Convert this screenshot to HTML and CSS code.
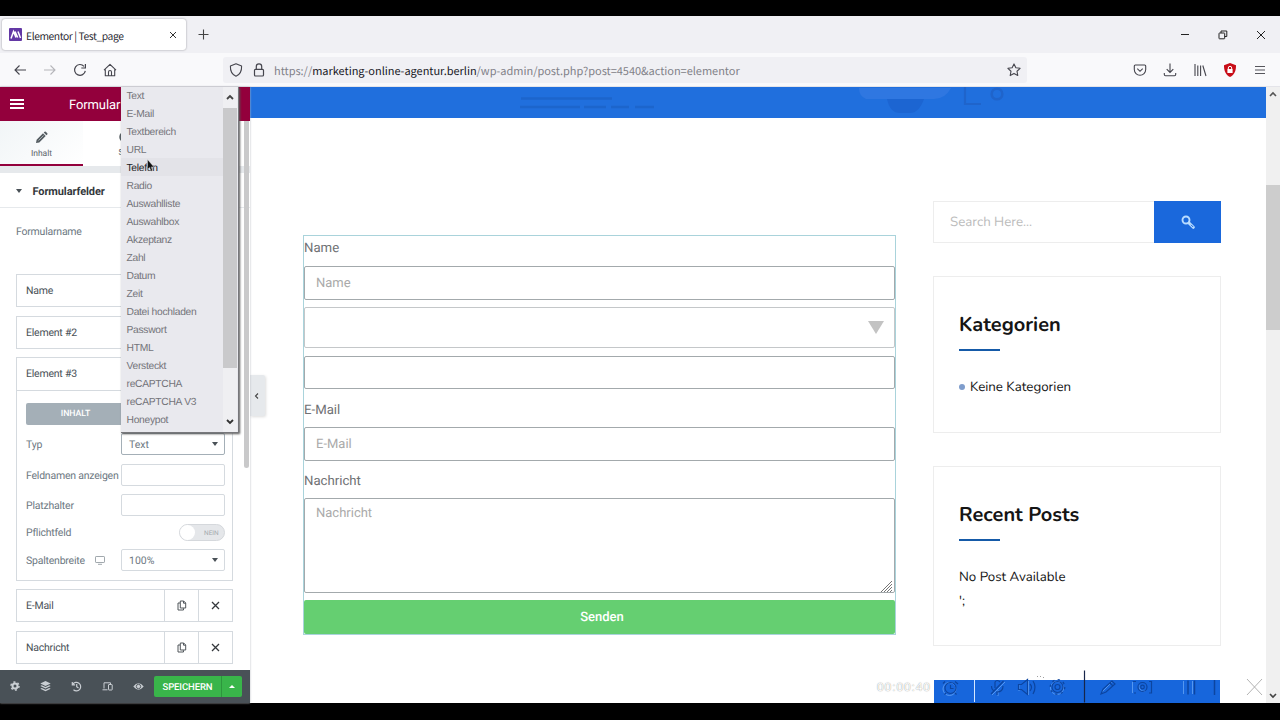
FILE: index.html
```html
<!DOCTYPE html>
<html lang="de">
<head>
<meta charset="utf-8">
<title>Elementor | Test_page</title>
<link rel="stylesheet" href="styles.css">
</head>
<body>
<div class="window">
  <header class="tabbar">
    <div class="tab">
      <svg class="favicon" width="13" height="13" viewBox="0 0 13 13"><rect width="13" height="13" rx="1" fill="#6338a5"/><path d="M2 10.500 4.500 3.500 7 9.500M6 3.500 8.700 9.500M9 3.500 11.500 10" fill="none" stroke="#fff" stroke-width="1.500"/></svg>
      <span class="tab-title">Elementor | Test_page</span>
      <svg class="tab-close" width="8" height="8" viewBox="0 0 8 8"><path d="M1 1 7 7M7 1 1 7" stroke="#333" stroke-width="1"/></svg>
    </div>
    <svg class="new-tab" width="11" height="11" viewBox="0 0 11 11"><path d="M5.500 .5v10M.5 5.500h10" stroke="#444" stroke-width="1.100"/></svg>
    <div class="window-buttons">
      <svg width="10" height="10" viewBox="0 0 10 10"><path d="M1 4.500h8" stroke="#222"/></svg>
      <svg width="10" height="10" viewBox="0 0 10 10" fill="none" stroke="#222"><rect x="1" y="3" width="5.700" height="5.800" rx=".5"/><path d="M3 3V1h5.800v5.500H6.700"/></svg>
      <svg width="10" height="10" viewBox="0 0 10 10"><path d="M1 1 9 9M9 1 1 9" stroke="#222"/></svg>
    </div>
  </header>
  <nav class="navbar">
    <div class="nav-buttons">
      <svg width="14" height="14" viewBox="0 0 14 14" fill="none" stroke="#45454d" stroke-width="1.100"><path d="M13 7H2M6.500 2.500 2 7l4.500 4.500"/></svg>
      <svg width="14" height="14" viewBox="0 0 14 14" fill="none" stroke="#b5b5ba" stroke-width="1.100"><path d="M1 7h11M7.500 2.500 12 7l-4.500 4.500"/></svg>
      <svg width="14" height="14" viewBox="0 0 14 14" fill="none" stroke="#45454d" stroke-width="1.200"><path d="M12.300 7.800A5.400 5.400 0 1 1 11 3.300M12.400 1v4H8.300"/></svg>
      <svg width="14" height="14" viewBox="0 0 14 14" fill="none" stroke="#45454d" stroke-width="1.100" stroke-linejoin="round"><path d="M1 7.200 7 1.300l6 5.900M2.300 6.500v6.200h9.400V6.500M5.500 12.500V9a1.500 1.500 0 0 1 3 0v3.500"/></svg>
    </div>
    <div class="urlbar">
      <svg width="14" height="14" viewBox="0 0 14 14" fill="none" stroke="#45454d" stroke-width="1.100" stroke-linejoin="round"><path d="M7 .8 12.600 3C12.800 8 10.500 11.800 7 13.200 3.500 11.800 1.200 8 1.400 3Z"/></svg>
      <svg width="12" height="14" viewBox="0 0 12 14" fill="none" stroke="#45454d" stroke-width="1.200"><rect x="1.500" y="6.300" width="9" height="6.700" rx="1"/><path d="M3.300 6V3.500a2.700 2.700 0 0 1 5.400 0V6"/></svg>
      <span class="url">https://<b>marketing-online-agentur.berlin</b>/wp-admin/post.php?post=4540&amp;action=elementor</span>
      <svg class="star" width="14" height="14" viewBox="0 0 14 14" fill="none" stroke="#45454d" stroke-width="1.100" stroke-linejoin="round"><path d="m7 .9 1.850 3.900 4.250.5-3.100 2.950.8 4.300L7 10.400l-3.800 2.150.8-4.300L.9 5.300l4.250-.5Z"/></svg>
    </div>
    <div class="nav-tools">
      <svg width="14" height="14" viewBox="0 0 14 14" fill="none" stroke="#45454d" stroke-width="1.100"><path d="M2.300 2h9.400q1 0 1 1v3.500a5.700 5.700 0 0 1-11.400 0V3q0-1 1-1ZM4.300 5.700 7 8.300l2.700-2.600"/></svg>
      <svg width="14" height="14" viewBox="0 0 14 14" fill="none" stroke="#45454d" stroke-width="1.100"><path d="M7 .5v9M3.700 6.200 7 9.500l3.300-3.300M1.300 10v1.600q0 1.200 1.200 1.200h9q1.200 0 1.200-1.200V10"/></svg>
      <svg width="14" height="14" viewBox="0 0 14 14" fill="none" stroke="#45454d" stroke-width="1.100"><path d="M2 1v12M4.800 2.500V13M7.600 2.500V13M9.800 2.500 13 13"/></svg>
      <svg width="14" height="14" viewBox="0 0 14 14"><path d="M7 0 13 2.200C13.200 8 11 12 7 14 3 12 .8 8 1 2.200Z" fill="#c80d18"/><rect x="4.400" y="6" width="5.200" height="4" fill="#fff"/><path d="M5.300 6V5a1.700 1.700 0 0 1 3.400 0v1" fill="none" stroke="#fff"/></svg>
      <svg width="14" height="14" viewBox="0 0 14 14" stroke="#55555c" stroke-width="1.100"><path d="M2 3.500h10M2 7h10M2 10.500h10"/></svg>
    </div>
  </nav>

  <main class="workspace">
    <aside class="panel">
      <div class="panel-header">
        <svg width="14" height="10" viewBox="0 0 14 10" stroke="#fff" stroke-width="1.900"><path d="M0 1h14M0 5h14M0 9h14"/></svg>
        <span class="panel-title">Formular</span>
        <svg class="panel-grid" width="3" height="10" viewBox="0 0 3 10" fill="#e9b9cb"><path d="M0 0h2v2H0ZM0 4h2v2H0ZM0 8h2v2H0Z"/></svg>
      </div>
      <div class="panel-tabs">
        <div class="panel-tab active">
          <svg width="13" height="13" viewBox="0 0 13 13" fill="#565e63"><path d="M1 12 1.600 8.700 8 2.300 10.700 5 4.300 11.400ZM8.700 1.600 9.600.7q.6-.5 1.200 0l1.500 1.500q.5.600 0 1.200l-.9.900Z"/><path d="m3.500 9.500 5-5" stroke="#dfe5e8" stroke-width=".6"/></svg>
          <span>Inhalt</span>
        </div>
        <div class="panel-tab">
          <svg width="12" height="12" viewBox="0 0 12 12"><circle cx="6" cy="6" r="5" fill="none" stroke="#565e63" stroke-width="1.500"/><path d="M6 1a5 5 0 0 0 0 10Z" fill="#565e63"/></svg>
          <span>Stil</span>
        </div>
        <div class="panel-tab"></div>
      </div>
      <div class="panel-body">
        <div class="section-head"><i class="caret"></i><b>Formularfelder</b></div>
        <div class="section">
          <div class="form-name">Formularname</div>
          <div class="item"><span>Name</span></div>
          <div class="item"><span>Element #2</span></div>
          <div class="item-open">
            <div class="item-title">Element #3</div>
            <div class="item-controls">
              <div class="subtab">INHALT</div>
              <div class="control first"><label>Typ</label><div class="box select dark"><span>Text</span><i class="caret"></i></div></div>
              <div class="control"><label>Feldnamen anzeigen</label><div class="box"></div></div>
              <div class="control"><label>Platzhalter</label><div class="box"></div></div>
              <div class="control short"><label>Pflichtfeld</label><div class="switch"><i></i><span>NEIN</span></div></div>
              <div class="control"><label>Spaltenbreite</label><svg class="device" width="10" height="9" viewBox="0 0 10 9" fill="none" stroke="#a1a8ad"><rect x=".5" y=".5" width="9" height="6" rx=".6"/><path d="M3 8.300h4"/></svg><div class="box select"><span>100%</span><i class="caret"></i></div></div>
            </div>
          </div>
          <div class="item tools"><span>E-Mail</span>
            <div class="tool"><svg width="10" height="11" viewBox="0 0 10 11" fill="none" stroke="#50565b"><path d="M3.300 1h3.400l2 2v5H3.300ZM6.500 1v2.200h2.200M3 3H1v7h5.500V8.300"/></svg></div>
            <div class="tool"><svg width="9" height="9" viewBox="0 0 9 9"><path d="M1 1 8 8M8 1 1 8" stroke="#34383c" stroke-width="1.300"/></svg></div>
          </div>
          <div class="item tools"><span>Nachricht</span>
            <div class="tool"><svg width="10" height="11" viewBox="0 0 10 11" fill="none" stroke="#50565b"><path d="M3.300 1h3.400l2 2v5H3.300ZM6.500 1v2.200h2.200M3 3H1v7h5.500V8.300"/></svg></div>
            <div class="tool"><svg width="9" height="9" viewBox="0 0 9 9"><path d="M1 1 8 8M8 1 1 8" stroke="#34383c" stroke-width="1.300"/></svg></div>
          </div>
        </div>
        <div class="panel-scroll"></div>
      </div>
      <footer class="panel-footer">
        <div class="foot-icons">
          <svg width="10" height="10" viewBox="0 0 10 10"><circle cx="5" cy="5" r="2.500" fill="none" stroke="#c9ced3" stroke-width="2"/><circle cx="5" cy="5" r="4" fill="none" stroke="#c9ced3" stroke-width="1.500" stroke-dasharray="2 2.190"/></svg>
          <svg width="11" height="11" viewBox="0 0 11 11" fill="#c9ced3"><path d="m5.500 0 5.200 2.500-5.200 2.500L.3 2.500Z"/><path d="m.3 5 1.500-.7 3.700 1.700 3.700-1.700 1.500.7-5.200 2.500Z"/><path d="m.3 7.700 1.500-.7 3.700 1.700L9.200 7l1.500.7-5.200 2.600Z"/></svg>
          <svg width="11" height="11" viewBox="0 0 11 11" fill="none" stroke="#c9ced3" stroke-width="1.200"><path d="M1.800 3.200A4.300 4.300 0 1 1 2.500 8.800M1.300 1v2.800h2.800M5.700 3v2.800l1.800 1.200"/></svg>
          <svg width="11" height="11" viewBox="0 0 11 11" fill="none" stroke="#c9ced3"><path d="M2 7.500V1.800h6.500V3M.5 8.800h5"/><rect x="6.500" y="3.500" width="3.700" height="5.500" rx=".5"/></svg>
          <svg width="11" height="11" viewBox="0 0 11 11"><path d="M.3 5.500Q5.500-.8 10.700 5.500 5.500 11.800.3 5.500Z" fill="#c9ced3"/><circle cx="5.500" cy="5.500" r="2.200" fill="none" stroke="#495157" stroke-width=".9"/></svg>
        </div>
        <div class="save"><span>SPEICHERN</span><div class="save-more"><i></i></div></div>
      </footer>
      <div class="dropdown">
        <ul>
          <li>Text</li><li>E-Mail</li><li>Textbereich</li><li>URL</li><li class="hover">Telefon</li><li>Radio</li><li>Auswahlliste</li><li>Auswahlbox</li><li>Akzeptanz</li><li>Zahl</li><li>Datum</li><li>Zeit</li><li>Datei hochladen</li><li>Passwort</li><li>HTML</li><li>Versteckt</li><li>reCAPTCHA</li><li>reCAPTCHA V3</li><li>Honeypot</li>
        </ul>
        <div class="dropdown-bar">
          <svg width="8" height="6" viewBox="0 0 8 6"><path d="M1 5 4 2l3 3" fill="none" stroke="#444" stroke-width="1.800"/></svg>
          <div class="dropdown-thumb"></div>
          <svg class="down" width="8" height="6" viewBox="0 0 8 6"><path d="m1 1 3 3 3-3" fill="none" stroke="#333" stroke-width="1.800"/></svg>
        </div>
      </div>
      <svg class="cursor" width="8" height="13" viewBox="0 0 8 13"><path d="M.5.500v9.800l2-1.900 1.600 3.800 1.500-.7L4 8h3Z" fill="#111" stroke="#eee" stroke-width=".4"/></svg>
    </aside>

    <section class="preview">
      <div class="hero">
        <svg width="1016" height="31" viewBox="0 0 1016 31"><g stroke="#1c65cc" stroke-width="2.500" fill="none"><path d="M271 11.500h91M270 20h60M334 20h22M361 20h18M385 20h19"/></g><path d="M609 1h92q-6 11-17 11h-68q-7-3-7-11Z" fill="#2f77e1"/><path d="M637 12h37q-5 14-14 14h-10q-10 0-13-14Z" fill="#1c65d2"/><path d="M715 0v17h16" fill="none" stroke="#1f64cb" stroke-width="2.200"/><circle cx="747" cy="7" r="5.300" fill="none" stroke="#1f64cb" stroke-width="2.600"/></svg>
      </div>
      <div class="collapse"><svg width="5" height="8" viewBox="0 0 5 8"><path d="M4 1.500 1.500 4 4 6.500" fill="none" stroke="#444" stroke-width="1.100"/></svg></div>
      <div class="page">
        <form class="contact">
          <div class="label top">Name</div>
          <div class="field">Name</div>
          <div class="field choice"><i></i></div>
          <div class="field"></div>
          <div class="label">E-Mail</div>
          <div class="field">E-Mail</div>
          <div class="label">Nachricht</div>
          <div class="field area">Nachricht<svg width="12" height="12" viewBox="0 0 12 12"><path d="M0 12 11 1M3 12l8-8M6 12l5-5M9 12l2-2" stroke="#666" stroke-width=".9"/></svg></div>
          <div class="send">Senden</div>
        </form>
        <div class="sidebar">
          <div class="search"><span>Search Here...</span><div class="search-button"><svg width="14" height="14" viewBox="0 0 14 14" fill="none"><circle cx="5" cy="5" r="3.500" stroke="#b9dcff" stroke-width="1.900"/><path d="m8 8 4.300 4.300" stroke="#b9dcff" stroke-width="3" stroke-linecap="round"/><path d="m10 9.800 2.200 2.200" stroke="#1b68dc" stroke-width="1"/></svg></div></div>
          <div class="card"><h2>Kategorien</h2><ul><li>Keine Kategorien</li></ul></div>
          <div class="card recent"><h2>Recent Posts</h2><p>No Post Available<br>';</p></div>
          <div class="blue-card"></div>
        </div>
      </div>
      <div class="recorder">
        <span class="timer">00:00:40</span>
        <svg width="346" height="33" viewBox="934 670 346 33" fill="none" stroke="#0c45a0" stroke-width="1.200">
          <g stroke="#65a3f5" stroke-width=".8"><circle cx="949.500" cy="689" r="6.500"/><circle cx="1057" cy="688" r="6.500"/><path d="M1019 685v6M1028.500 681v14M1102 692l10-10M1132.500 682v11M1139 685a5 5 0 0 0 6 6M1183.500 681v13M1192.500 681v13M1005 682l-13 13M998 690v6M1151.500 682v10"/></g>
          <circle cx="950.500" cy="688" r="5.500"/><path d="M950.500 685v3.500h3M945 681.500l-2 2M955 681.500l3 2.500M946 693l-1.500 1.500M955 693l1.500 1.500"/>
          <path d="M974.500 680v22" stroke="#d5e8ff" stroke-width="1"/>
          <path d="M1003.500 681 991 694M995 688v-6q2-3 5 0M991.500 686q0 4 3 5M1003 686q0 6-6 6v3"/>
          <path d="M1018.500 684.500h3l6-5v15l-6-5h-3ZM1030 684q3 3 0 7M1033 681q4 6 0 13"/>
          <circle cx="1057.500" cy="687" r="5.500"/><circle cx="1057.500" cy="687" r="2.500"/><circle cx="1057.500" cy="687" r="7.300" stroke-dasharray="2.300 3.430"/>
          <path d="M1084.500 670.500v32" stroke="#17264a"/>
          <path d="m1101 694 2-5 9-8 3 3-9 8ZM1110 683l3 3"/>
          <path d="M1136 681.500h-3M1149 681.500h2.500v11.500h-2.500M1134 693h2"/><circle cx="1142.500" cy="687" r="4.500"/><circle cx="1142.500" cy="687" r="1.800"/>
          <path d="M1188 680.500v14M1194.500 680.500v14M1214.500 680v15" stroke-width="1.500"/>
          <path d="m1247 679 15 16M1262 679l-15 16" stroke="#aaa" stroke-width=".9"/>
          <path d="M1037 676.500h1M1040 676.500h1M1043 677.500h1" stroke="#888" stroke-width=".8"/>
        </svg>
      </div>
      <div class="page-scroll">
        <svg width="8" height="6" viewBox="0 0 8 6"><path d="M1 5 4 2l3 3" fill="none" stroke="#555" stroke-width="1.600"/></svg>
        <div class="page-thumb"></div>
        <svg class="down" width="8" height="6" viewBox="0 0 8 6"><path d="m1 1 3 3 3-3" fill="none" stroke="#444" stroke-width="1.600"/></svg>
      </div>
    </section>
  </main>
</div>
</body>
</html>
```

FILE: styles.css
```css
* { box-sizing: border-box; }
body { margin: 0; background: #000; font-family: Roboto, "Liberation Sans", sans-serif; text-rendering: geometricPrecision; }
svg { display: block; flex: none; }
.window { height: 720px; padding: 16px 0 17px; display: flex; flex-direction: column; overflow: hidden; }

.tabbar { height: 37px; flex: none; background: #f0f0f4; display: flex; align-items: center; font-family: "Noto Sans CJK SC", "Open Sans", sans-serif; }
.tab { width: 184px; height: 31px; margin-left: 2px; padding: 0 9px 0 7px; display: flex; align-items: center; background: #fff; border-radius: 3px; box-shadow: 0 0 2px #8a8a90; }
.tab-title { margin-left: 4px; padding-top: 2px; font-size: 10.3px; letter-spacing: -.42px; color: #2b2a33; white-space: nowrap; line-height: 16px; }
.tab-close { margin-left: auto; }
.new-tab { margin-left: 12px; }
.window-buttons { margin-left: auto; padding-right: 14px; display: flex; gap: 28px; }

.navbar { height: 34px; flex: none; background: #f9f9fb; display: flex; align-items: center; border-bottom: 1px solid #e4e4e9; }
.nav-buttons { display: flex; gap: 16px; width: 223px; padding-left: 13px; }
.urlbar { width: 804px; height: 26px; background: #f0f0f4; border-radius: 3px; display: flex; align-items: center; padding: 0 6px; }
.urlbar svg + svg { margin-left: 10px; }
.url { margin-left: 9px; padding-top: 2px; color: #818188; font: 11px/16px "Noto Sans CJK SC", "Open Sans", sans-serif; letter-spacing: -.025px; white-space: nowrap; }
.url b { font-weight: 400; color: #18181f; }
.star { margin-left: auto; }
.nav-tools { margin-left: auto; padding-right: 13px; display: flex; gap: 16px; }

.workspace { flex: 1; min-height: 0; display: flex; }
.panel { width: 250px; flex: none; position: relative; z-index: 2; display: flex; flex-direction: column; background: #fff; color: #555d66; font-size: 10.5px; letter-spacing: -.22px; box-shadow: 0 0 2px #b7bcc1; }
.panel-header { height: 34px; flex: none; background: #93003c; display: flex; align-items: center; padding: 0 10px; }
.panel-title { color: #fff; font-size: 13px; letter-spacing: -.1px; margin-left: 45px; padding-top: 2px; }
.panel-grid { margin-left: auto; }
.panel-tabs { height: 52px; flex: none; display: flex; border-bottom: 7px solid #e6e9ec; background: #fff; }
.panel-tab { width: 83px; display: flex; flex-direction: column; align-items: center; gap: 5px; padding-top: 10px; font-size: 8.5px; line-height: 11px; letter-spacing: 0; }
.panel-tab.active { background: linear-gradient(135deg, #f1f5f7, #fff); border-bottom: 2px solid #93003c; color: #5c636a; }
.panel-body { flex: 1; min-height: 0; position: relative; }
.section-head { height: 35px; border-bottom: 1px solid #e6e9ec; display: flex; align-items: center; padding: 2px 0 0 16px; font-size: 11px; letter-spacing: -.1px; color: #34383c; }
.section-head b { margin-left: 10.500px; font-weight: 700; }
.caret { border: solid transparent; border-width: 4px 3.5px 0; border-top-color: #495157; }
.section { padding: 16px 17px 0 16px; }
.form-name { height: 50px; line-height: 16px; color: #6d7882; }
.item { height: 33px; margin-bottom: 9px; border: 1px solid #d5dadf; display: flex; align-items: center; padding-left: 9px; color: #495157; }
.item-open { height: 224px; border: 1px solid #d5dadf; margin: -1px 0 8px; }
.item-title { height: 33px; line-height: 32px; padding-left: 9px; border-bottom: 1px solid #d5dadf; color: #495157; }
.item-controls { padding: 12px 7px 0 9px; }
.subtab { width: 99px; height: 22px; line-height: 23px; text-align: center; color: #fff; background: #a4afb7; border-radius: 2px; font-size: 8.7px; font-weight: 500; letter-spacing: 0; }
.control { height: 22px; margin-bottom: 8px; display: flex; align-items: center; color: #6d7882; white-space: nowrap; }
.control.first { margin-top: 8px; margin-bottom: 9px; }
.control.short { height: 17px; }
.box { width: 104px; height: 22px; border: 1px solid #d5dadf; border-radius: 2px; margin-left: auto; flex: none; }
.select { display: flex; align-items: center; justify-content: space-between; padding: 0 6px 0 7px; letter-spacing: 0; }
.dark { border-color: #a4afb7; }
.device { margin-left: 10px; }
.switch { margin-left: auto; width: 46px; height: 17px; border: 1px solid #d5d8dc; border-radius: 9px; background: #e5e7ea; display: flex; align-items: center; color: #a4a9ae; font-size: 6.500px; letter-spacing: 0; }
.switch i { width: 15px; height: 15px; border-radius: 50%; background: #fff; margin-right: 9px; }
.tools > span { flex: 1; }
.tool { width: 34px; height: 31px; display: flex; align-items: center; justify-content: center; border-left: 1px solid #d5dadf; }
.panel-scroll { position: absolute; right: 1px; top: -52px; width: 5px; height: 347px; background: #c9c9ca; border-radius: 0 0 3px 3px; }
.panel-footer { height: 33px; flex: none; background: #495157; display: flex; align-items: center; justify-content: space-between; padding: 0 8px 0 10px; position: relative; }
.foot-icons { display: flex; gap: 20px; }
.save { width: 88px; height: 21px; background: #39b54a; border-radius: 2px; color: #fff; display: flex; align-items: center; font-size: 9.5px; font-weight: 500; letter-spacing: -.1px; }
.save > span { flex: 1; text-align: center; padding-top: 1px; }
.save-more { width: 21px; height: 21px; border-left: 1px solid #2d963d; display: flex; align-items: center; justify-content: center; }
.save-more i { border: solid transparent; border-width: 0 3px 3px; border-bottom-color: #fff; }

.dropdown { position: absolute; left: 121px; top: 0; width: 118px; height: 346px; background: #e9e9ee; border: solid #77777b; border-width: 0 1px 1px 0; box-shadow: 1px 1px 2px #555; display: flex; overflow: hidden; font: 10.300px/18px "Liberation Sans", sans-serif; letter-spacing: -.3px; color: #74747a; }
.dropdown ul { margin: -1px 0 0; padding: 0; width: 102px; list-style: none; white-space: nowrap; }
.dropdown li { height: 18px; padding: 2px 0 0 5.500px; line-height: 17px; }
.dropdown .hover { color: #222226; background: #e3e3e8; }
.dropdown-bar { width: 14px; background: #efeff2; display: flex; flex-direction: column; align-items: center; padding: 7px 0 7px; }
.dropdown-thumb { width: 14px; height: 260px; margin-top: 8px; background: #c9c9cb; }
.down { margin-top: auto; }
.cursor { position: absolute; left: 147px; top: 72px; }

.preview { flex: 1; position: relative; background: #fff; overflow: hidden; }
.hero { height: 31px; background: #206fdd; }
.collapse { position: absolute; left: 0; top: 288px; width: 15px; height: 41px; background: #e6e9ec; border-radius: 0 2px 2px 0; box-shadow: 1px 1px 3px #ddd; display: flex; align-items: center; padding-left: 4px; }
.page { display: flex; padding: 83px 59px 0 53px; }
.contact { width: 593px; flex: none; height: 400px; margin-top: 34px; border: 1px solid #a9d3db; color: #6f7174; font-size: 13.200px; }
.label { height: 30px; padding-top: 4.500px; line-height: 17px; }
.label.top { padding-top: 3.500px; }
.field { height: 33.5px; margin-bottom: 7.7px; border: 1px solid #a3a9ac; border-radius: 2px; line-height: 33px; padding-left: 11px; color: #aaa; font-size: 13px; }
.choice { height: 41px; border-color: #c4c7c9; display: flex; align-items: center; justify-content: flex-end; padding-right: 10px; }
.choice i { border: solid transparent; border-width: 13px 8px 0; border-top-color: #c3c3c3; }
.area { height: 94.3px; line-height: 29px; position: relative; }
.area svg { position: absolute; right: 1px; bottom: 0; }
.send { height: 33.5px; line-height: 36px; background: #65cf71; border-radius: 2px; text-align: center; color: #fff; font-size: 13px; font-weight: 500; padding-left: 5px; }

.sidebar { width: 288px; margin-left: 37px; font-family: Nunito, "Open Sans", sans-serif; color: #151515; }
.search { height: 42px; border: 1px solid #ededed; display: flex; align-items: center; padding-left: 16px; color: #bcbcbc; font-size: 13.3px; }
.search-button { width: 67px; height: 42px; margin: 0 -1px 0 auto; background: #1a68dc; display: flex; align-items: center; justify-content: center; }
.card { height: 157px; margin-top: 33px; border: 1px solid #ededed; padding: 34px 25px 0; font-size: 13.3px; }
.card h2 { margin: 0; height: 40px; border-bottom: 2px solid #155aa8; border-image: linear-gradient(90deg, #155aa8 42px, transparent 42px) 1; font-size: 20px; line-height: 29px; font-weight: 700; }
.card ul { list-style: none; margin: 26px 0 0; padding: 0; }
.card li { line-height: 20px; display: flex; align-items: center; }
.card li::before { content: ""; width: 6px; height: 6px; border-radius: 50%; background: #7f9dcc; margin-right: 5px; }
.card p { margin: 24px 0 0; line-height: 24px; }
.recent { height: 180px; }
.blue-card { width: 286px; height: 40px; margin: 34px 0 0 1px; background: #1766dc; }
.recorder { position: absolute; right: 0; bottom: 0; height: 33px; display: flex; align-items: center; }
.timer { width: 57px; color: #fff; font: 12px "Liberation Sans", sans-serif; text-shadow: 0 0 1px #777; letter-spacing: .9px; white-space: nowrap; }
.page-scroll { position: absolute; right: 0; top: 0; bottom: 0; width: 14px; background: #f0f0f0; display: flex; flex-direction: column; align-items: center; padding: 4px 0; }
.page-thumb { width: 14px; height: 145px; margin-top: 88px; background: #cdcdcd; }
```
